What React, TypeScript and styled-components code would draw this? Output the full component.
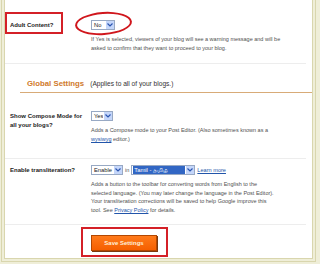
import React from 'react';
import styled, { createGlobalStyle } from 'styled-components';

const GlobalStyle = createGlobalStyle`
  html, body {
    margin: 0;
    padding: 0;
    background: #efeed8;
  }
  body {
    font-family: "Liberation Sans", Arial, sans-serif;
    color: #333;
  }
`;

const Page = styled.div`
  width: 320px;
  height: 264px;
  overflow: hidden;
  background: #efeed8;
  padding-left: 4px;
  box-sizing: border-box;
`;

const Panel = styled.div`
  width: 309px;
  height: 259px;
  box-sizing: border-box;
  background: #fff;
  border: 1px solid #d9d6ae;
  border-top: none;
  box-shadow: 0 0 0 2px #efeed8, 0 0 0 3px #d9d6ae;
  display: flex;
  flex-direction: column;
`;

const Row = styled.div<{ $top: number; $height: number }>`
  display: grid;
  grid-template-columns: 81px 1fr;
  padding: ${(p) => p.$top}px 10px 0 5px;
  height: ${(p) => p.$height}px;
  box-sizing: border-box;
  margin: 0 6px 0 0;
  border-bottom: 1px solid #ededed;
`;

const Label = styled.div`
  position: relative;
  font-size: 6px;
  font-weight: bold;
  line-height: 9px;
  color: #222;
  padding-top: 1px;
`;

const LabelBox = styled.span`
  position: absolute;
  left: -5px;
  top: -8px;
  width: 58px;
  height: 22px;
  box-sizing: border-box;
  border: 2px solid #d42027;
`;

const Field = styled.div`
  position: relative;
`;

const Ellipse = styled.span`
  position: absolute;
  left: -16px;
  top: -8px;
  width: 57px;
  height: 23px;
  box-sizing: border-box;
  border: 2px solid #d0161c;
  border-radius: 50%;
  transform: rotate(-4deg);
`;

const Controls = styled.div`
  display: flex;
  align-items: center;
  gap: 2px;
  height: 10px;
  font-size: 5.6px;
  color: #555;
`;

const Select = styled.div<{ $width: number }>`
  display: flex;
  align-items: center;
  justify-content: space-between;
  width: ${(p) => p.$width}px;
  height: 10px;
  flex-shrink: 0;
  box-sizing: border-box;
  border: 1px solid #98a9c4;
  background: #fff;
  font-size: 5.8px;
  color: #222;
  padding: 0 0 0 1px;
`;

const Chosen = styled.span<{ $active?: boolean }>`
  flex: 1;
  height: 100%;
  display: flex;
  align-items: center;
  padding-left: 1px;
  margin-right: 1px;
  white-space: nowrap;
  overflow: hidden;
  background: ${(p) => (p.$active ? '#3166c4' : 'transparent')};
  color: ${(p) => (p.$active ? '#fff' : '#222')};
`;

const Arrow = styled.span`
  width: 8px;
  height: 8px;
  background: #c4d6fa;
  display: flex;
  align-items: center;
  justify-content: center;
`;

const Desc = styled.p<{ $width: number }>`
  margin: 5px 0 0;
  max-width: ${(p) => p.$width}px;
  font-size: 5.5px;
  line-height: 8.7px;
  color: #505050;
`;

const Link = styled.span`
  color: #2255aa;
  text-decoration: underline;
`;

const Heading = styled.div`
  display: flex;
  align-items: baseline;
  gap: 6px;
  margin: 15px 0 0 15px;
  padding: 0 0 4px 7px;
  line-height: 9px;
  border-bottom: 1px solid #d8ab78;
`;

const HeadingTitle = styled.span`
  font-size: 7.8px;
  font-weight: bold;
  color: #cf7a2c;
`;

const HeadingNote = styled.span`
  font-size: 6.6px;
  color: #333;
`;

const Footer = styled.div`
  padding: 2px 0 0 76px;
`;

const ButtonFrame = styled.div`
  width: 87px;
  height: 30px;
  box-sizing: border-box;
  border: 2px solid #d42027;
  padding: 6px 0 0 8px;
`;

const SaveButton = styled.button`
  display: block;
  width: 66px;
  height: 16px;
  border: 1px solid #b34700;
  background: linear-gradient(#ff7a1a, #f55f00);
  color: #fff0d8;
  font-family: "Liberation Sans", Arial, sans-serif;
  font-size: 6px;
  font-weight: bold;
  padding: 0;
  box-shadow: 1px 1px 0 #7a3a10;
`;

const Chevron = () => (
  <svg width="6" height="4" viewBox="0 0 6 4">
    <path d="M0.5 0.5 L3 3 L5.5 0.5" fill="none" stroke="#2b55b0" strokeWidth="1.2" />
  </svg>
);

const Dropdown: React.FC<{ value: string; width: number; active?: boolean }> = ({
  value,
  width,
  active,
}) => (
  <Select $width={width}>
    <Chosen $active={active}>{value}</Chosen>
    <Arrow>
      <Chevron />
    </Arrow>
  </Select>
);

export default function App() {
  return (
    <>
      <GlobalStyle />
      <Page>
        <Panel>
          <Row $top={20} $height={64}>
            <Label>
              <LabelBox />
              Adult Content?
            </Label>
            <Field>
              <Ellipse />
              <Controls>
                <Dropdown value="No" width={24} />
              </Controls>
              <Desc $width={200}>
                If Yes is selected, viewers of your blog will see a warning message and will be
                asked to confirm that they want to proceed to your blog.
              </Desc>
            </Field>
          </Row>

          <Heading>
            <HeadingTitle>Global Settings</HeadingTitle>
            <HeadingNote>(Applies to all of your blogs.)</HeadingNote>
          </Heading>

          <Row $top={18} $height={66}>
            <Label>
              Show Compose Mode for
              <br />
              all your blogs?
            </Label>
            <Field>
              <Controls>
                <Dropdown value="Yes" width={22} />
              </Controls>
              <Desc $width={190}>
                Adds a Compose mode to your Post Editor. (Also sometimes known as a{' '}
                <Link>wysiwyg</Link> editor.)
              </Desc>
            </Field>
          </Row>

          <Row $top={6} $height={66}>
            <Label>Enable transliteration?</Label>
            <Field>
              <Controls>
                <Dropdown value="Enable" width={32} />
                <span>in</span>
                <Dropdown value="Tamil - தமிழ்" width={64} active />
                <Link>Learn more</Link>
              </Controls>
              <Desc $width={205}>
                Adds a button to the toolbar for converting words from English to the
                <br />
                selected language. (You may later change the language in the Post Editor).
                <br />
                Your transliteration corrections will be saved to help Google improve this
                <br />
                tool. See <Link>Privacy Policy</Link> for details.
              </Desc>
            </Field>
          </Row>

          <Footer>
            <ButtonFrame>
              <SaveButton>Save Settings</SaveButton>
            </ButtonFrame>
          </Footer>
        </Panel>
      </Page>
    </>
  );
}
